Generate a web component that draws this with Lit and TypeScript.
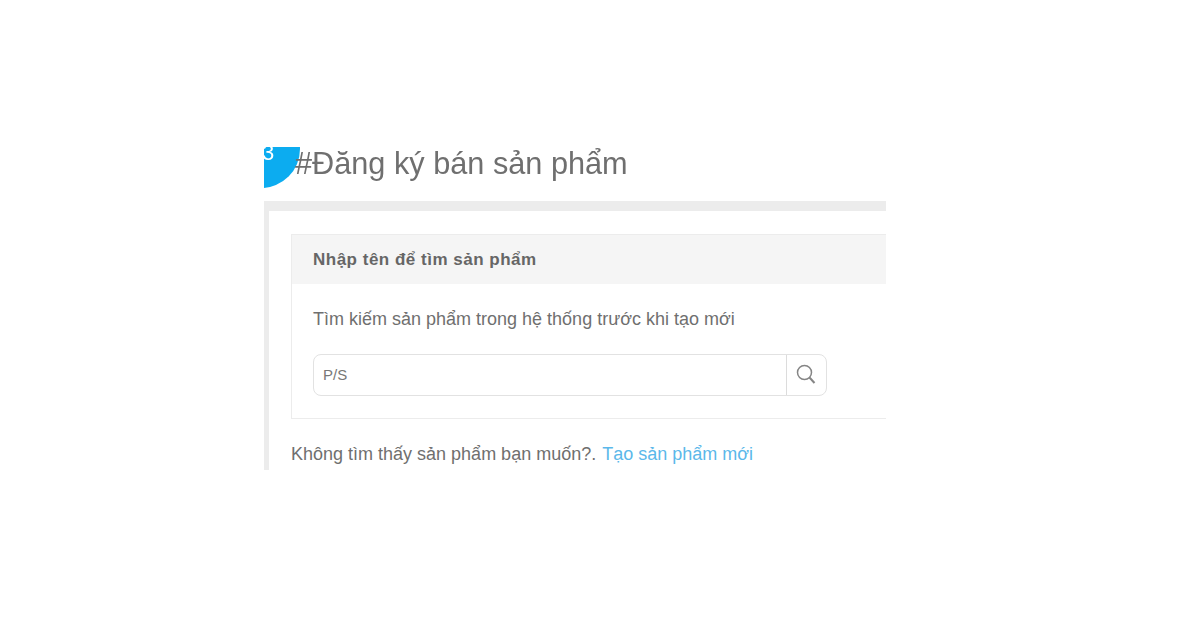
import { LitElement, html, css } from "lit";
import { customElement } from "lit/decorators.js";

@customElement("app-root")
export class AppRoot extends LitElement {
  static styles = css`
    :host {
      display: block;
      width: 1200px;
      height: 625px;
      background: #fff;
      font-family: "Liberation Sans", Arial, sans-serif;
      overflow: hidden;
    }
    .shot {
      position: relative;
      width: 622px;
      height: 323px;
      margin: 147px 0 0 264px;
      overflow: hidden;
      filter: blur(0.5px);
    }
    .badge {
      position: absolute;
      left: -42px;
      top: -37px;
      width: 78px;
      height: 78px;
      border-radius: 50%;
      background: #0cacf0;
      color: #fff;
      font-size: 22px;
      line-height: 1;
    }
    .badge span {
      position: absolute;
      left: 40px;
      top: 32px;
    }
    h1 {
      position: relative;
      margin: 0;
      height: 54px;
      padding-left: 31px;
      font-size: 30.7px;
      font-weight: 400;
      line-height: 34px;
      color: #6f6f6f;
    }
    .frame {
      height: 269px;
      box-sizing: border-box;
      background: #fff;
      border-top: 10px solid #ececec;
      border-left: 5px solid #ececec;
      padding: 23px 0 0 22px;
    }
    .panel {
      height: 185px;
      box-sizing: border-box;
      border: 1px solid #ececec;
      border-right: 0;
    }
    .head {
      height: 49px;
      box-sizing: border-box;
      background: #f5f5f5;
      padding-left: 21px;
      font-size: 17px;
      letter-spacing: 0.5px;
      font-weight: 700;
      line-height: 50px;
      color: #666;
    }
    .body {
      padding: 24px 0 0 21px;
    }
    .body p {
      margin: 0 0 24px;
      height: 22px;
      font-size: 18px;
      line-height: 22px;
      color: #6f6f6f;
    }
    .search {
      display: flex;
      width: 514px;
      height: 42px;
      box-sizing: border-box;
      border: 1.5px solid #e2e2e2;
      border-radius: 8px;
    }
    .value {
      flex: 1;
      padding-left: 9px;
      font-size: 15px;
      line-height: 40px;
      color: #777;
    }
    .btn {
      width: 39px;
      display: flex;
      align-items: center;
      justify-content: center;
      border-left: 1.5px solid #dcdcdc;
    }
    .btn svg {
      display: block;
      margin: -3px 2px 0 0;
    }
    .foot {
      margin: 24px 0 0;
      font-size: 18px;
      line-height: 22px;
      color: #6f6f6f;
    }
    .foot a {
      margin-left: 1px;
      color: #5bb8ea;
      text-decoration: none;
    }
  `;

  render() {
    return html`
      <div class="shot">
        <div class="badge"><span>3</span></div>
        <h1>#Đăng ký bán sản phẩm</h1>
        <div class="frame">
          <div class="panel">
            <div class="head">Nhập tên để tìm sản phẩm</div>
            <div class="body">
              <p>Tìm kiếm sản phẩm trong hệ thống trước khi tạo mới</p>
              <div class="search">
                <div class="value">P/S</div>
                <div class="btn">
                  <svg width="22" height="22" viewBox="0 0 22 22" fill="none" stroke="#858585">
                    <circle cx="9.5" cy="9.5" r="7" stroke-width="1.5" />
                    <path d="M14.5 14.5L19.5 20" stroke-width="2" />
                  </svg>
                </div>
              </div>
            </div>
          </div>
          <p class="foot">Không tìm thấy sản phẩm bạn muốn?. <a href="#">Tạo sản phẩm mới</a></p>
        </div>
      </div>
    `;
  }
}
